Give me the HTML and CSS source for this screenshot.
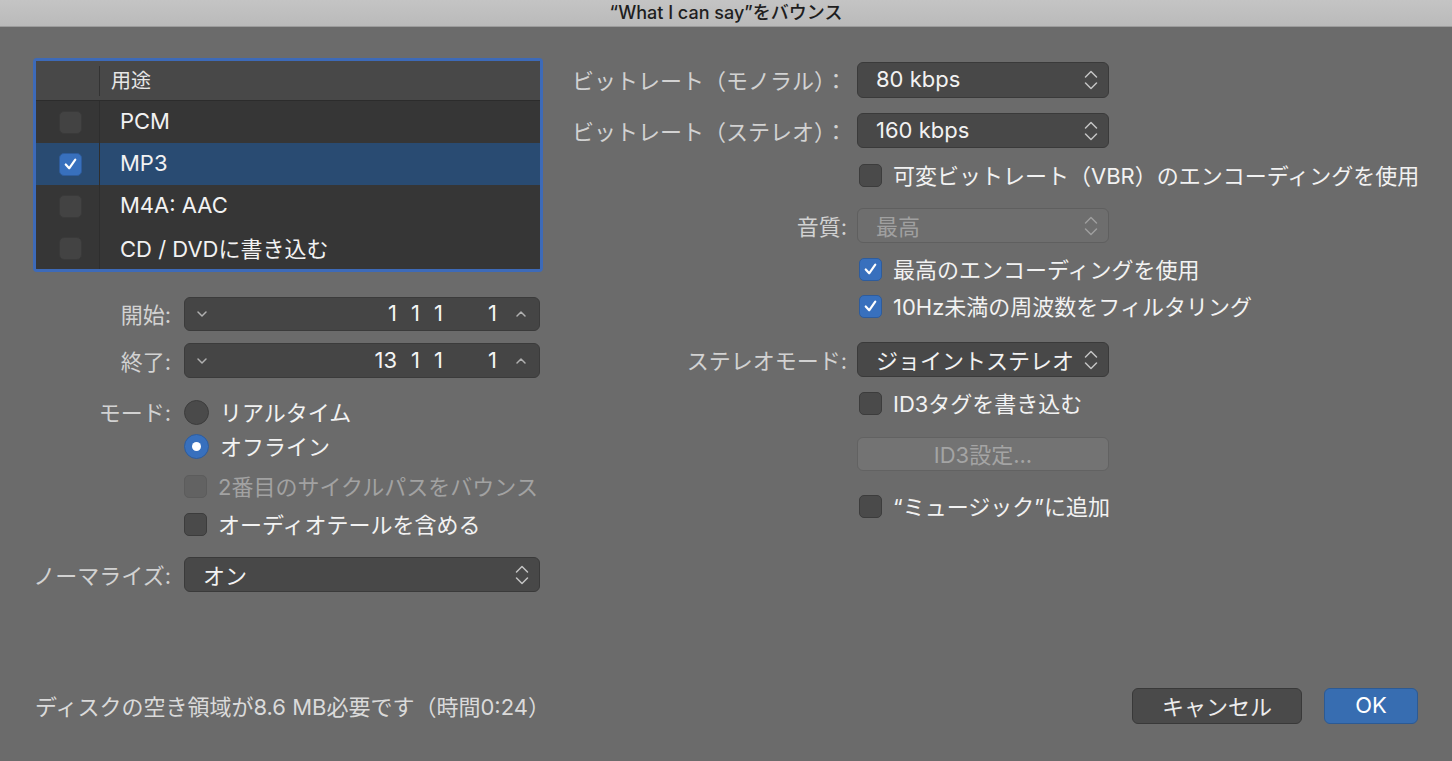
FILE: index.html
```html
<!DOCTYPE html>
<html lang="ja">
<head>
<meta charset="utf-8">
<title>バウンス</title>
<link rel="stylesheet" href="styles.css">
</head>
<body>
<div class="window">
  <div class="titlebar">“What I can say”をバウンス</div>
  <div class="content">
    <div class="left">
      <div class="table">
        <div class="thead">
          <div class="col-check"></div>
          <div class="col-name">用途</div>
        </div>
        <div class="trow">
          <div class="col-check"><span class="cb"></span></div>
          <div class="col-name">PCM</div>
        </div>
        <div class="trow selected">
          <div class="col-check"><span class="cb on"><svg viewBox="0 0 22 22"><path d="M6 11.5 L9.6 15.5 L16 6.5" /></svg></span></div>
          <div class="col-name">MP3</div>
        </div>
        <div class="trow">
          <div class="col-check"><span class="cb"></span></div>
          <div class="col-name">M4A: AAC</div>
        </div>
        <div class="trow">
          <div class="col-check"><span class="cb"></span></div>
          <div class="col-name">CD / DVDに書き込む</div>
        </div>
      </div>

      <div class="lform">
        <div class="frow row-start">
          <span class="lbl">開始:</span>
          <div class="stepper">
            <svg class="sdown" viewBox="0 0 12 8"><path d="M2 2 L6 6 L10 2"/></svg>
            <span class="pos"><span class="bar">1</span><span class="beat">1</span><span class="div">1</span><span class="tick">1</span></span>
            <svg class="sup" viewBox="0 0 12 8"><path d="M2 6 L6 2 L10 6"/></svg>
          </div>
        </div>
        <div class="frow row-end">
          <span class="lbl">終了:</span>
          <div class="stepper">
            <svg class="sdown" viewBox="0 0 12 8"><path d="M2 2 L6 6 L10 2"/></svg>
            <span class="pos"><span class="bar">13</span><span class="beat">1</span><span class="div">1</span><span class="tick">1</span></span>
            <svg class="sup" viewBox="0 0 12 8"><path d="M2 6 L6 2 L10 6"/></svg>
          </div>
        </div>
        <div class="frow row-mode1">
          <span class="lbl">モード:</span>
          <span class="radio"></span><span class="opt">リアルタイム</span>
        </div>
        <div class="frow row-mode2">
          <span class="lbl"></span>
          <span class="radio on"></span><span class="opt">オフライン</span>
        </div>
        <div class="frow row-cycle">
          <span class="lbl"></span>
          <span class="cb disabled"></span><span class="opt dim">2番目のサイクルパスをバウンス</span>
        </div>
        <div class="frow row-tail">
          <span class="lbl"></span>
          <span class="cb"></span><span class="opt">オーディオテールを含める</span>
        </div>
        <div class="frow row-norm">
          <span class="lbl">ノーマライズ:</span>
          <div class="popup wide">
            <span class="pv">オン</span>
            <svg class="updown" viewBox="0 0 14 20"><path d="M1.5 7 L7 1.5 L12.5 7 M1.5 13 L7 18.5 L12.5 13"/></svg>
          </div>
        </div>
      </div>
    </div>

    <div class="right">
      <div class="rrow row-mono">
        <span class="rlbl">ビットレート（モノラル）：</span>
        <div class="popup">
          <span class="pv">80 kbps</span>
          <svg class="updown" viewBox="0 0 14 20"><path d="M1.5 7 L7 1.5 L12.5 7 M1.5 13 L7 18.5 L12.5 13"/></svg>
        </div>
      </div>
      <div class="rrow row-stereo">
        <span class="rlbl">ビットレート（ステレオ）：</span>
        <div class="popup">
          <span class="pv">160 kbps</span>
          <svg class="updown" viewBox="0 0 14 20"><path d="M1.5 7 L7 1.5 L12.5 7 M1.5 13 L7 18.5 L12.5 13"/></svg>
        </div>
      </div>
      <div class="rrow row-vbr">
        <span class="rlbl"></span>
        <span class="cb"></span><span class="opt">可変ビットレート（VBR）のエンコーディングを使用</span>
      </div>
      <div class="rrow row-quality">
        <span class="rlbl">音質:</span>
        <div class="popup disabled">
          <span class="pv">最高</span>
          <svg class="updown" viewBox="0 0 14 20"><path d="M1.5 7 L7 1.5 L12.5 7 M1.5 13 L7 18.5 L12.5 13"/></svg>
        </div>
      </div>
      <div class="rrow row-best">
        <span class="rlbl"></span>
        <span class="cb on"><svg viewBox="0 0 22 22"><path d="M6 11.5 L9.6 15.5 L16 6.5" /></svg></span><span class="opt">最高のエンコーディングを使用</span>
      </div>
      <div class="rrow row-filter">
        <span class="rlbl"></span>
        <span class="cb on"><svg viewBox="0 0 22 22"><path d="M6 11.5 L9.6 15.5 L16 6.5" /></svg></span><span class="opt">10Hz未満の周波数をフィルタリング</span>
      </div>
      <div class="rrow row-smode">
        <span class="rlbl">ステレオモード:</span>
        <div class="popup">
          <span class="pv">ジョイントステレオ</span>
          <svg class="updown" viewBox="0 0 14 20"><path d="M1.5 7 L7 1.5 L12.5 7 M1.5 13 L7 18.5 L12.5 13"/></svg>
        </div>
      </div>
      <div class="rrow row-id3">
        <span class="rlbl"></span>
        <span class="cb"></span><span class="opt">ID3タグを書き込む</span>
      </div>
      <div class="rrow row-id3set">
        <span class="rlbl"></span>
        <div class="btn disabled">ID3設定...</div>
      </div>
      <div class="rrow row-music">
        <span class="rlbl"></span>
        <span class="cb"></span><span class="opt">“ミュージック”に追加</span>
      </div>
    </div>
  </div>

  <div class="footer">
    <span class="info">ディスクの空き領域が8.6 MB必要です（時間0:24）</span>
    <div class="buttons">
      <div class="btn cancel">キャンセル</div>
      <div class="btn ok">OK</div>
    </div>
  </div>
</div>
</body>
</html>
```

FILE: styles.css
```css
* { box-sizing: border-box; }

html, body {
  margin: 0;
  padding: 0;
}

body {
  width: 1452px;
  height: 761px;
  overflow: hidden;
  background: #6b6b6b;
  font-family: "Inter", "Noto Sans CJK JP", sans-serif;
  font-size: 22px;
  color: #f0f0f0;
}

.window {
  width: 1452px;
  height: 761px;
  display: flex;
  flex-direction: column;
  background: #6b6b6b;
}

/* Title bar */
.titlebar {
  height: 27px;
  flex: none;
  background: linear-gradient(#c4c4c4, #bababa);
  border-bottom: 1px solid #9c9c9c;
  color: #1e1e1e;
  font-size: 18px;
  font-weight: 500;
  display: flex;
  align-items: center;
  justify-content: center;
  line-height: 1;
}

.content {
  height: 661px;
  flex: none;
  display: flex;
  gap: 17px;
}

/* Left column */
.left {
  width: 543px;
  padding-left: 33px;
  padding-top: 31px;
  flex: none;
}

.table {
  width: 510px;
  height: 214px;
  border: 3px solid #3d6ab8;
  border-radius: 4px;
  background: #363636;
  overflow: hidden;
}

.thead {
  height: 40px;
  display: flex;
  background: #484848;
  border-bottom: 1px solid #2c2c2c;
}

.thead .col-check {
  width: 64px;
  position: relative;
}

.thead .col-check::after {
  content: "";
  position: absolute;
  right: 0;
  top: 5px;
  bottom: 4px;
  width: 1px;
  background: #333333;
}

.thead .col-name {
  padding-left: 11px;
  display: flex;
  align-items: center;
  font-size: 20px;
  color: #e6e6e6;
  padding-bottom: 2px;
}

.trow {
  height: 42px;
  display: flex;
  background: #363636;
}

.trow.selected {
  background: #294b72;
}

.trow .col-check {
  width: 64px;
  border-right: 1px solid #2e2e2e;
  display: flex;
  align-items: center;
  padding-left: 23px;
}

.trow .col-name {
  padding-left: 20px;
  padding-bottom: 2px;
  display: flex;
  align-items: center;
  color: #f2f2f2;
}

/* Checkboxes & radios */
.cb {
  width: 23px;
  height: 23px;
  flex: none;
  border-radius: 5px;
  background: #4a4a4a;
  border: 1px solid #3c3c3c;
  display: inline-flex;
  align-items: center;
  justify-content: center;
}

.trow .cb {
  background: #434343;
  border-color: #3a3a3a;
}

.cb.on {
  background: #3870bd;
  border-color: #2e5c9c;
}

.cb.on svg {
  width: 22px;
  height: 22px;
}

.cb.on path {
  fill: none;
  stroke: #ffffff;
  stroke-width: 2.3;
  stroke-linecap: round;
  stroke-linejoin: round;
}

.cb.disabled {
  background: #626262;
  border-color: #5c5c5c;
}

.radio {
  width: 25px;
  height: 25px;
  flex: none;
  border-radius: 50%;
  background: #4a4a4a;
  border: 1px solid #3c3c3c;
  display: inline-flex;
  align-items: center;
  justify-content: center;
}

.radio.on {
  background: #3870bd;
  border-color: #2e5c9c;
}

.radio.on::after {
  content: "";
  width: 9px;
  height: 9px;
  border-radius: 50%;
  background: #ffffff;
}

.opt {
  margin-left: 11px;
  color: #f2f2f2;
  white-space: nowrap;
  padding-bottom: 2px;
}

.opt.dim {
  color: #a2a2a2;
}

/* Left form */
.lform {
  display: flex;
  flex-direction: column;
}

.frow {
  display: flex;
  align-items: center;
}

.lbl {
  width: 138px;
  margin-right: 13px;
  flex: none;
  text-align: right;
  color: #d2d2d2;
  white-space: nowrap;
  padding-bottom: 2px;
}

.row-start { margin-top: 25px; height: 34px; }
.row-end { margin-top: 12px; height: 35px; }
.row-mode1 { margin-top: 20px; height: 28px; }
.row-mode2 { margin-top: 6px; height: 28px; }
.row-cycle { margin-top: 12px; height: 28px; }
.row-tail { margin-top: 10px; height: 28px; }
.row-norm { margin-top: 19px; height: 35px; }

.stepper {
  width: 356px;
  height: 100%;
  background: #454545;
  border: 1px solid #3b3b3b;
  border-radius: 6px;
  display: flex;
  align-items: center;
  padding: 0 12px 0 11px;
}

.stepper svg {
  width: 12px;
  height: 8px;
  flex: none;
}

.stepper path {
  fill: none;
  stroke: #b0b0b0;
  stroke-width: 1.5;
  stroke-linecap: round;
  stroke-linejoin: round;
}

.pos {
  flex: 1;
  display: flex;
  justify-content: flex-end;
  padding-right: 18px;
  padding-bottom: 2px;
  color: #f4f4f4;
}

.pos span {
  text-align: right;
  display: inline-block;
}

.pos .bar { width: 40px; }
.pos .beat { width: 23px; }
.pos .div { width: 23px; }
.pos .tick { width: 54px; }

/* Popups */
.popup {
  width: 252px;
  height: 100%;
  flex: none;
  background: #484848;
  border: 1px solid #3a3a3a;
  border-radius: 6px;
  display: flex;
  align-items: center;
  justify-content: space-between;
  padding: 0 10px 0 18px;
}

.popup.wide {
  width: 356px;
}

.pv {
  color: #f2f2f2;
  white-space: nowrap;
  padding-bottom: 2px;
}

.updown {
  width: 14px;
  height: 20px;
  flex: none;
}

.updown path {
  fill: none;
  stroke: #c4c4c4;
  stroke-width: 1.5;
  stroke-linecap: round;
  stroke-linejoin: round;
}

.popup.disabled {
  background: #6e6e6e;
  border-color: #5f5f5f;
}

.popup.disabled .pv {
  color: #a0a0a0;
}

.popup.disabled .updown path {
  stroke: #9e9e9e;
}

/* Right column */
.right {
  padding-top: 35px;
  display: flex;
  flex-direction: column;
}

.rrow {
  display: flex;
  align-items: center;
}

.rlbl {
  width: 287px;
  margin-right: 10px;
  flex: none;
  text-align: right;
  color: #d2d2d2;
  white-space: nowrap;
  padding-bottom: 2px;
}

.rrow .cb {
  margin-left: 2px;
}

.row-mono { height: 36px; }
.row-stereo { margin-top: 15px; height: 35px; }
.row-vbr { margin-top: 13px; height: 28px; }
.row-quality { margin-top: 19px; height: 35px; }
.row-best { margin-top: 12px; height: 28px; }
.row-filter { margin-top: 9px; height: 28px; }
.row-smode { margin-top: 22px; height: 35px; }
.row-id3 { margin-top: 12px; height: 28px; }
.row-id3set { margin-top: 20px; height: 34px; }
.row-music { margin-top: 21px; height: 28px; }

/* Buttons */
.btn {
  height: 100%;
  display: flex;
  align-items: center;
  justify-content: center;
  border-radius: 6px;
  white-space: nowrap;
  padding-bottom: 2px;
}

.btn.disabled {
  width: 252px;
  background: #737373;
  border: 1px solid #626262;
  color: #a4a4a4;
}

/* Footer */
.footer {
  height: 36px;
  flex: none;
  display: flex;
  align-items: center;
  justify-content: space-between;
  padding: 0 34px 0 35px;
}

.info {
  color: #dadada;
  white-space: nowrap;
  padding-bottom: 2px;
}

.buttons {
  height: 100%;
  display: flex;
  gap: 22px;
}

.btn.cancel {
  width: 170px;
  background: #4a4a4a;
  border: 1px solid #393939;
  color: #ececec;
}

.btn.ok {
  width: 94px;
  background: #376db1;
  border: 1px solid #2c5a94;
  color: #ffffff;
}
```
